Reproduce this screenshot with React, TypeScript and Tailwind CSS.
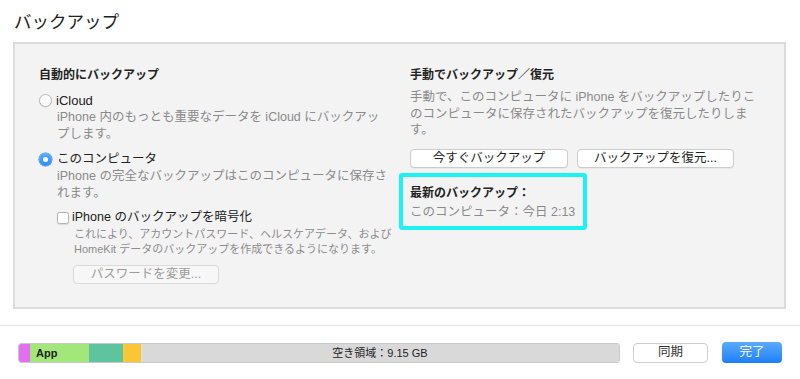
const font = "font-['Liberation_Sans','Noto_Sans_CJK_JP',sans-serif]";

function Radio({ checked }: { checked?: boolean }) {
  if (checked) {
    return (
      <span className="flex h-[13px] w-[13px] shrink-0 items-center justify-center rounded-full bg-gradient-to-b from-[#5aacfd] to-[#2a8cf9] shadow-[0_0_0_0.5px_#2a82e8]">
        <span className="h-[5px] w-[5px] rounded-full bg-white" />
      </span>
    );
  }
  return (
    <span className="h-[13px] w-[13px] shrink-0 rounded-full border border-[#b9b9b9] bg-white shadow-[0_0.5px_1px_rgba(0,0,0,0.12)]" />
  );
}

function Button({
  children,
  className = "",
  disabled,
}: {
  children: React.ReactNode;
  className?: string;
  disabled?: boolean;
}) {
  return (
    <div
      className={`flex h-[19px] items-center justify-center rounded-[4px] border text-[12.5px] ${
        disabled
          ? "border-[#dadada] bg-[#f7f7f7] text-[#9b9b9b]"
          : "border-[#cdcdcd] bg-white text-[#222] shadow-[0_0.5px_0.5px_rgba(0,0,0,0.08)]"
      } ${className}`}
    >
      {children}
    </div>
  );
}

export default function App() {
  return (
    <div className={`h-[379px] w-[800px] overflow-hidden bg-white text-[#222] ${font}`}>
      <h1 className="h-[42px] pl-[14px] pt-[10px] text-[17.5px] leading-[24px]">
        バックアップ
      </h1>

      <section className="ml-[13px] mr-[14px] flex h-[267px] border-2 border-[#dcdcdc] bg-[#f3f3f3]">
        {/* Automatic */}
        <div className="w-[371px] whitespace-nowrap pl-[24px] pt-[23px]">
          <div className="text-[12px] font-bold leading-[16px]">自動的にバックアップ</div>

          <div className="mt-[9px] flex h-[17px] items-center gap-[4px]">
            <Radio />
            <span className="text-[13px]">iCloud</span>
          </div>
          <p className="pl-[18px] text-[12.5px] leading-[17px] text-[#8a8a8a]">
            iPhone 内のもっとも重要なデータを iCloud にバックアッ
            <br />
            プします。
          </p>

          <div className="mt-[8px] flex h-[17px] items-center gap-[5px]">
            <Radio checked />
            <span className="text-[12.5px]">このコンピュータ</span>
          </div>
          <p className="pl-[18px] text-[12.5px] leading-[17px] text-[#8a8a8a]">
            iPhone の完全なバックアップはこのコンピュータに保存さ
            <br />
            れます。
          </p>

          <div className="mt-[7px] flex h-[17px] items-center gap-[3px] pl-[18px]">
            <span className="h-[12px] w-[12px] rounded-[2.5px] border border-[#b4b4b4] bg-white shadow-[0_0.5px_1px_rgba(0,0,0,0.1)]" />
            <span className="text-[12.5px]">iPhone のバックアップを暗号化</span>
          </div>
          <p className="mt-[1px] pl-[35px] text-[11px] leading-[15px] text-[#8c8c8c]">
            これにより、アカウントパスワード、ヘルスケアデータ、および
            <br />
            HomeKit データのバックアップを作成できるようになります。
          </p>

          <Button disabled className="ml-[34px] mt-[8px] w-[146px]">
            パスワードを変更...
          </Button>
        </div>

        {/* Manual */}
        <div className="flex-1 whitespace-nowrap pl-[24px] pt-[23px]">
          <div className="text-[12px] font-bold leading-[16px]">手動でバックアップ／復元</div>
          <p className="mt-[6px] text-[12.5px] leading-[16.5px] text-[#8a8a8a]">
            手動で、このコンピュータに iPhone をバックアップしたりこ
            <br />
            のコンピュータに保存されたバックアップを復元したりしま
            <br />
            す。
          </p>

          <div className="mt-[10px] flex gap-[9px]">
            <Button className="w-[158px]">今すぐバックアップ</Button>
            <Button className="w-[157px]">バックアップを復元...</Button>
          </div>

          <div className="-ml-[11px] mt-[5px] w-[188px] rounded-[3px] border-4 border-[#1ff2f2] pb-[6px] pl-[7px] pt-[8px]">
            <div className="text-[12px] font-bold leading-[16px]">最新のバックアップ：</div>
            <div className="mt-[3px] text-[12.5px] leading-[16px] text-[#8a8a8a]">
              このコンピュータ：今日 2:13
            </div>
          </div>
        </div>
      </section>

      <div className="mt-[16px] border-t border-[#e4e4e4]" />

      <footer className="flex items-center pl-[18px] pt-[16px]">
        <div className="flex h-[20px] w-[602px] overflow-hidden rounded-[3px] border border-[#c9c9c9] text-[11px] leading-[18px]">
          <div className="w-[11px] bg-[#e46ef0]" />
          <div className="w-[59px] bg-[#a3e77b] pl-[6px] font-semibold text-[#222]">App</div>
          <div className="w-[34px] bg-[#5ec4a0]" />
          <div className="w-[18px] bg-[#fac634]" />
          <div className="flex-1 bg-[#d9d9d9] text-center text-[#222]">空き領域：9.15 GB</div>
        </div>

        <div className="ml-[13px] flex h-[20px] w-[75px] items-center justify-center rounded-[4px] border border-[#cfcfcf] bg-white text-[12.5px] text-[#333]">
          同期
        </div>
        <div className="ml-[14px] flex h-[21px] w-[60px] items-center justify-center rounded-[4px] bg-gradient-to-b from-[#5aacfd] to-[#1a7ef7] text-[12.5px] text-white">
          完了
        </div>
      </footer>
    </div>
  );
}
